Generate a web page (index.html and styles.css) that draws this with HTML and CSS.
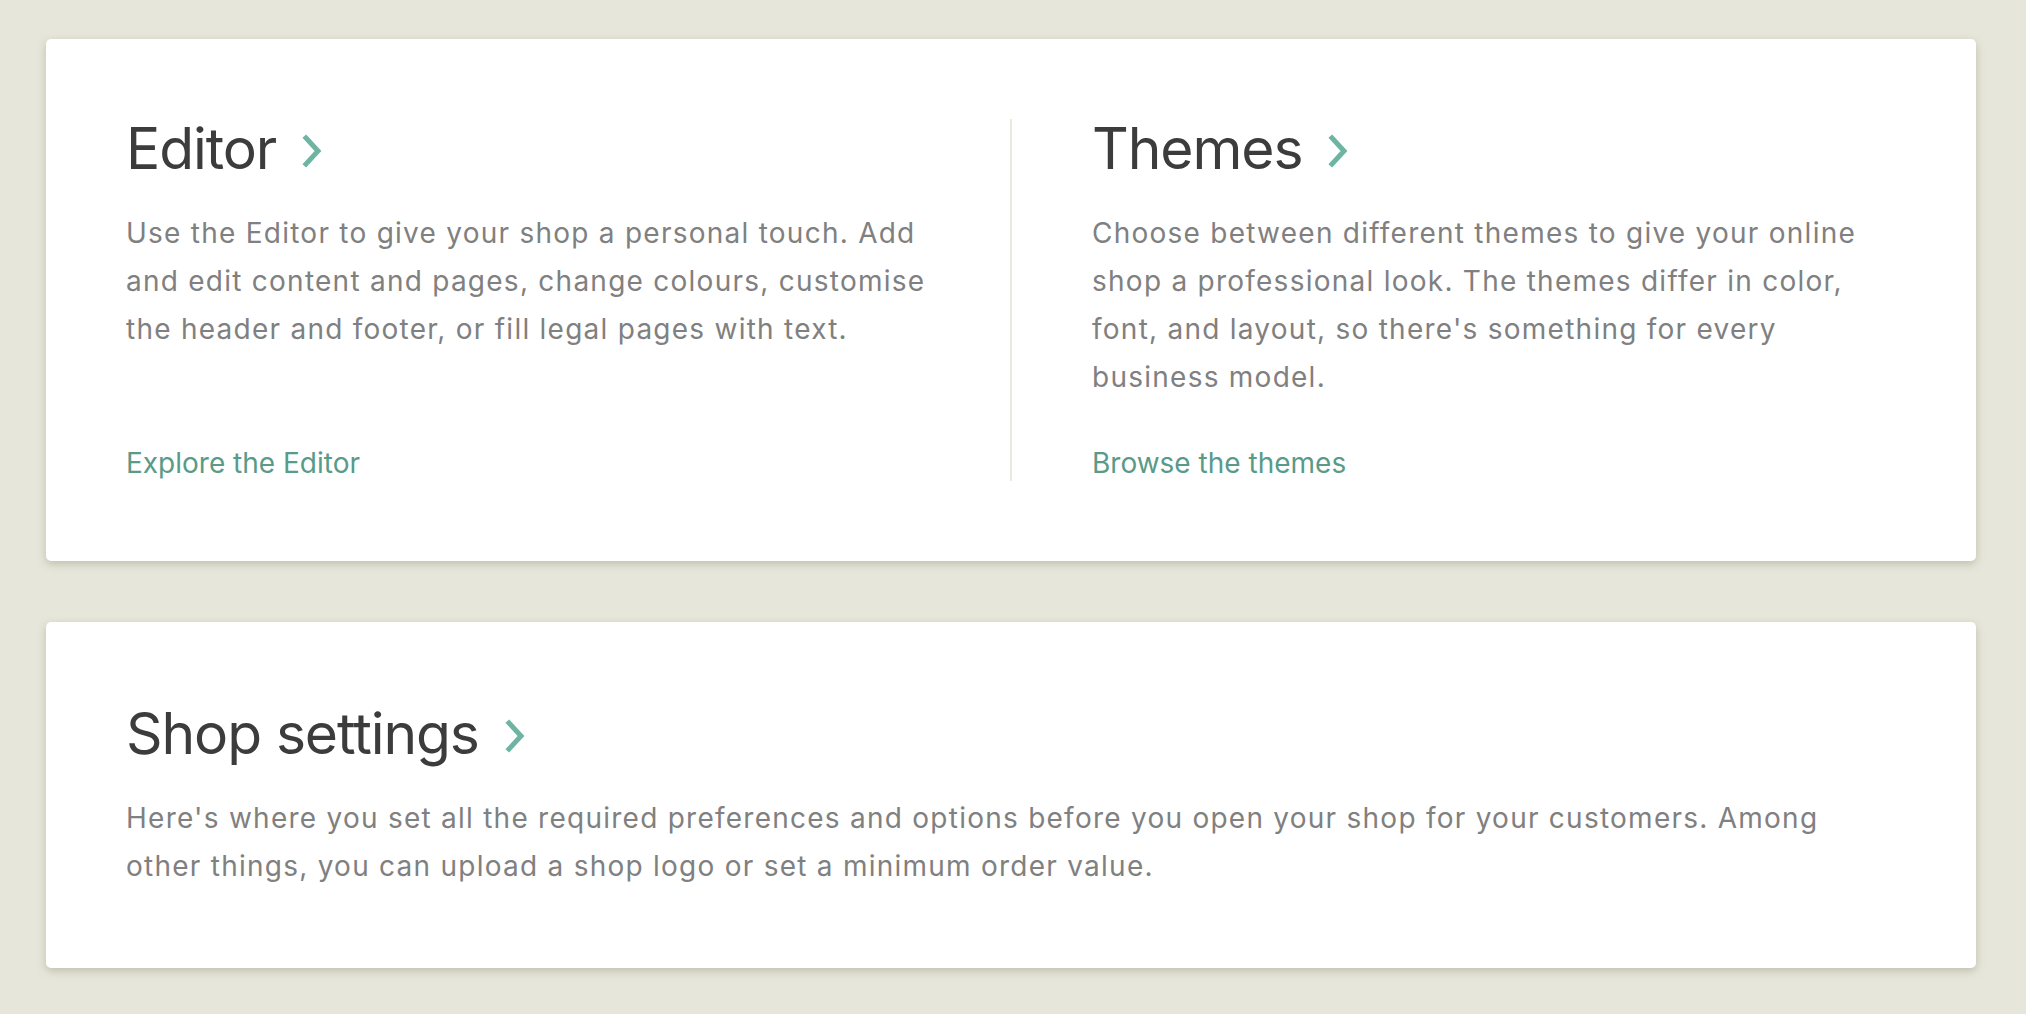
FILE: index.html
```html
<!DOCTYPE html>
<html lang="en">
<head>
<meta charset="utf-8">
<title>Shop overview</title>
<link rel="stylesheet" href="styles.css">
</head>
<body>
<main class="page">
  <section class="card card-split">
    <div class="col">
      <h2 class="title">Editor <svg class="chev" viewBox="0 0 22 34" aria-hidden="true"><path d="M4 4 L16 17 L4 30"/></svg></h2>
      <p class="desc">Use the Editor to give your shop a personal touch. Add and edit content and pages, change colours, customise the header and footer, or fill legal pages with text.</p>
      <a class="link" href="#">Explore the Editor</a>
    </div>
    <div class="divider"></div>
    <div class="col">
      <h2 class="title">Themes <svg class="chev" viewBox="0 0 22 34" aria-hidden="true"><path d="M4 4 L16 17 L4 30"/></svg></h2>
      <p class="desc">Choose between different themes to give your online shop a professional look. The themes differ in color, font, and layout, so there's something for every business model.</p>
      <a class="link" href="#">Browse the themes</a>
    </div>
  </section>
  <section class="card card-single">
    <div class="col">
      <h2 class="title">Shop settings <svg class="chev" viewBox="0 0 22 34" aria-hidden="true"><path d="M4 4 L16 17 L4 30"/></svg></h2>
      <p class="desc">Here's where you set all the required preferences and options before you open your shop for your customers. Among other things, you can upload a shop logo or set a minimum order value.</p>
    </div>
  </section>
</main>
</body>
</html>
```

FILE: styles.css
```css
html, body {
  margin: 0;
  padding: 0;
  background: #e6e6da;
}
body {
  font-family: Inter, "Open Sans", "Liberation Sans", sans-serif;
  -webkit-font-smoothing: antialiased;
}
.page {
  padding: 39px 50px 40px 46px;
  display: flex;
  flex-direction: column;
  gap: 61px;
}
.card {
  background: #ffffff;
  border-radius: 5px;
  box-shadow: 0 3px 9px rgba(120, 120, 95, 0.35);
  padding: 80px;
  display: flex;
}
.card-split .col {
  flex: 1 1 0;
  display: flex;
  flex-direction: column;
}
.card-split .col:first-child {
  padding-right: 80px;
}
.card-split .col:last-child {
  padding-left: 80px;
}
.card-single {
  padding-top: 82px;
  padding-bottom: 78px;
}
.card-single .col {
  flex: 1 1 auto;
}
.divider {
  width: 2px;
  background: #e9e9de;
  flex: 0 0 2px;
}
.title {
  margin: 0;
  font-size: 57px;
  line-height: 60px;
  font-weight: 400;
  color: #3c3c3c;
  letter-spacing: -1.1px;
  display: flex;
  align-items: center;
  gap: 26px;
}
.chev {
  width: 22px;
  height: 34px;
  margin-top: 4px;
}
.chev path {
  fill: none;
  stroke: #6db5a2;
  stroke-width: 5;
  stroke-linecap: square;
  stroke-linejoin: miter;
}
.desc {
  margin: 30px 0 0;
  font-size: 28px;
  line-height: 48px;
  letter-spacing: 1.25px;
  color: #808080;
}
.link {
  margin-top: auto;
  padding-top: 44px;
  font-size: 28px;
  line-height: 36px;
  color: #5a9a88;
  text-decoration: none;
}
```
